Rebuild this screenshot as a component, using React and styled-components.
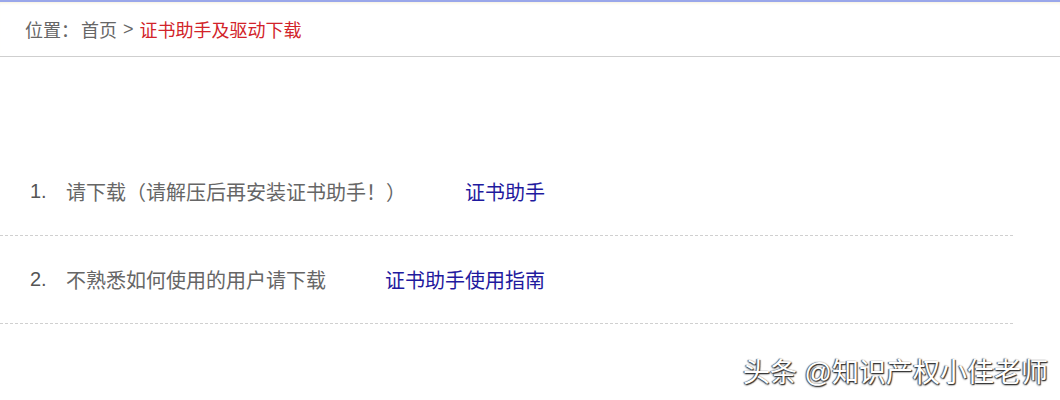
import React from 'react';
import styled, { createGlobalStyle } from 'styled-components';

const GlobalStyle = createGlobalStyle`
  html, body {
    margin: 0;
    padding: 0;
    background: #fff;
    font-family: "Liberation Sans", "Noto Sans CJK SC", sans-serif;
  }
`;

const Page = styled.div`
  position: relative;
  width: 1060px;
  height: 400px;
  overflow: hidden;
  background: #fff;
`;

const Crumbs = styled.div`
  height: 54px;
  display: flex;
  align-items: center;
  padding-left: 25px;
  border-top: 2px solid #9aa7ea;
  border-bottom: 1px solid #cfcfcf;
  font-size: 18px;
  color: #666;
  box-shadow: inset 0 3px 3px -2px rgba(240, 230, 200, 0.6);
`;

const Label = styled.span`
  margin-right: 2px;
`;

const Sep = styled.span`
  margin: 0 6px;
`;

const Current = styled.span`
  color: #d2232a;
`;

const List = styled.div`
  width: 1013px;
  padding-top: 91px;
`;

const Row = styled.div`
  height: 87px;
  display: grid;
  grid-template-columns: 36px 479px;
  align-items: center;
  padding-left: 30px;
  border-bottom: 1px dashed #d0d0d0;
  font-size: 20px;
`;

const Num = styled.span`
  color: #555;
`;

const Cell = styled.div`
  display: flex;
  justify-content: space-between;
  align-items: center;
`;

const Text = styled.span`
  color: #666;
`;

const DownLink = styled.a`
  color: #1f1a9e;
  text-decoration: none;
`;

const Watermark = styled.div`
  position: absolute;
  right: 12px;
  bottom: 12px;
  font-size: 27px;
  line-height: 30px;
  color: #fff;
  text-shadow: 1px 1px 1px #333, -1px 0 1px #555, 0 1px 2px #444;
`;

const items = [
  { n: '1.', text: '请下载（请解压后再安装证书助手！）', link: '证书助手' },
  { n: '2.', text: '不熟悉如何使用的用户请下载', link: '证书助手使用指南' },
];

export default function App() {
  return (
    <Page>
      <GlobalStyle />
      <Crumbs>
        <Label>位置：</Label>
        <span>首页</span>
        <Sep>&gt;</Sep>
        <Current>证书助手及驱动下载</Current>
      </Crumbs>
      <List>
        {items.map((it) => (
          <Row key={it.n}>
            <Num>{it.n}</Num>
            <Cell>
              <Text>{it.text}</Text>
              <DownLink href="#">{it.link}</DownLink>
            </Cell>
          </Row>
        ))}
      </List>
      <Watermark>头条 @知识产权小佳老师</Watermark>
    </Page>
  );
}
